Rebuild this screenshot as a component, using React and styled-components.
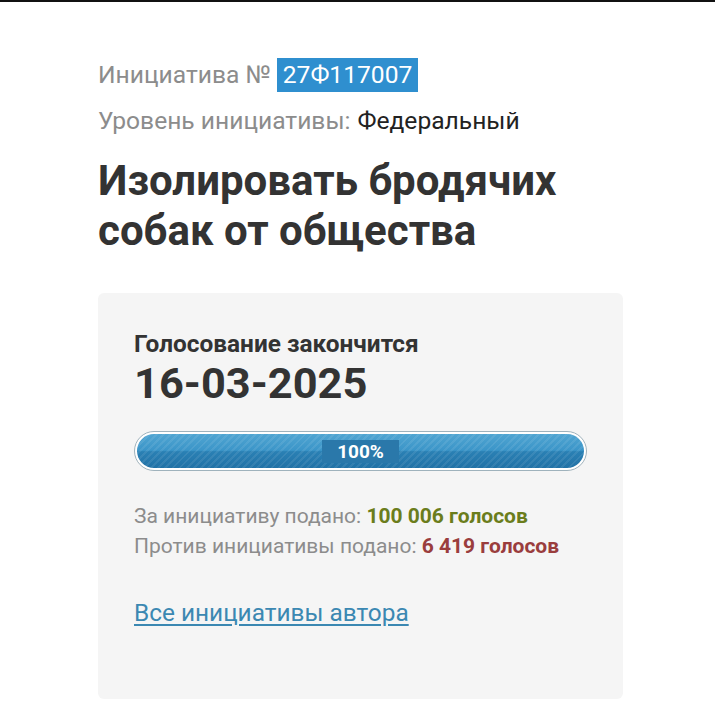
import React from 'react'
import styled, { createGlobalStyle } from 'styled-components'

const GlobalStyle = createGlobalStyle`
  html, body {
    margin: 0;
    padding: 0;
    background: #fff;
  }
  body {
    font-family: Roboto, 'Noto Sans', 'Liberation Sans', sans-serif;
    color: #333;
    border-top: 2px solid #111;
  }
`

const Page = styled.main`
  width: 525px;
  padding: 56px 0 0 98px;
`

const MetaRow = styled.div`
  display: flex;
  align-items: center;
  font-size: 24.6px;
  color: #8c8c8c;
  line-height: 34px;
  margin-bottom: ${(p) => p.$gap || 0}px;
`

const Badge = styled.span`
  background: #2f8fcf;
  color: #fff;
  padding: 0 6px;
  margin-left: 6px;
  line-height: 34px;
`

const Value = styled.span`
  color: #222;
  margin-left: 7px;
`

const Title = styled.h1`
  margin: 18px 0 0;
  font-size: 42px;
  line-height: 50px;
  font-weight: 700;
  color: #333;
`

const Card = styled.section`
  margin-top: 37px;
  background: #f5f5f5;
  border-radius: 6px;
  padding: 37px 36px 72px;
`

const EndsLabel = styled.div`
  font-size: 24.4px;
  font-weight: 700;
  color: #333;
  line-height: 28px;
`

const EndsDate = styled.div`
  font-size: 43.4px;
  font-weight: 700;
  color: #333;
  line-height: 48px;
  margin-top: 2px;
`

const Progress = styled.div`
  box-sizing: border-box;
  margin-top: 23px;
  height: 40px;
  border: 1px solid #9fb2bc;
  border-radius: 20px;
  padding: 2px;
  background: #fff;
  display: flex;
`

const Fill = styled.div`
  flex: 1;
  border-radius: 18px;
  display: flex;
  align-items: center;
  justify-content: center;
  background:
    repeating-linear-gradient(
      -45deg,
      rgba(255, 255, 255, 0.08) 0 2px,
      rgba(255, 255, 255, 0) 2px 5px
    ),
    linear-gradient(to bottom, #50a5d2 0%, #3b95c8 48%, #2a80b4 52%, #2272a6 100%);
`

const Percent = styled.span`
  background: #2a78aa;
  color: #fff;
  font-size: 19px;
  font-weight: 700;
  padding: 0 15px;
  line-height: 23px;
`

const Stats = styled.div`
  margin-top: 30px;
  font-size: 21px;
  line-height: 30px;
  color: #8c8c8c;
`

const Count = styled.b`
  color: ${(p) => p.$color};
`

const AuthorLink = styled.a`
  display: inline-block;
  margin-top: 37px;
  font-size: 24.4px;
  line-height: 29px;
  color: #3b88b2;
  text-decoration: underline;
  text-underline-offset: 3px;
`

export default function App() {
  return (
    <>
      <GlobalStyle />
      <Page>
        <MetaRow $gap={12}>
          Инициатива № <Badge>27Ф117007</Badge>
        </MetaRow>
        <MetaRow>
          Уровень инициативы: <Value>Федеральный</Value>
        </MetaRow>
        <Title>
          Изолировать бродячих
          <br />
          собак от общества
        </Title>
        <Card>
          <EndsLabel>Голосование закончится</EndsLabel>
          <EndsDate>16-03-2025</EndsDate>
          <Progress>
            <Fill>
              <Percent>100%</Percent>
            </Fill>
          </Progress>
          <Stats>
            <div>
              За инициативу подано: <Count $color='#6b7d1c'>100 006 голосов</Count>
            </div>
            <div>
              Против инициативы подано: <Count $color='#9a3d3d'>6 419 голосов</Count>
            </div>
          </Stats>
          <AuthorLink href='#'>Все инициативы автора</AuthorLink>
        </Card>
      </Page>
    </>
  )
}
